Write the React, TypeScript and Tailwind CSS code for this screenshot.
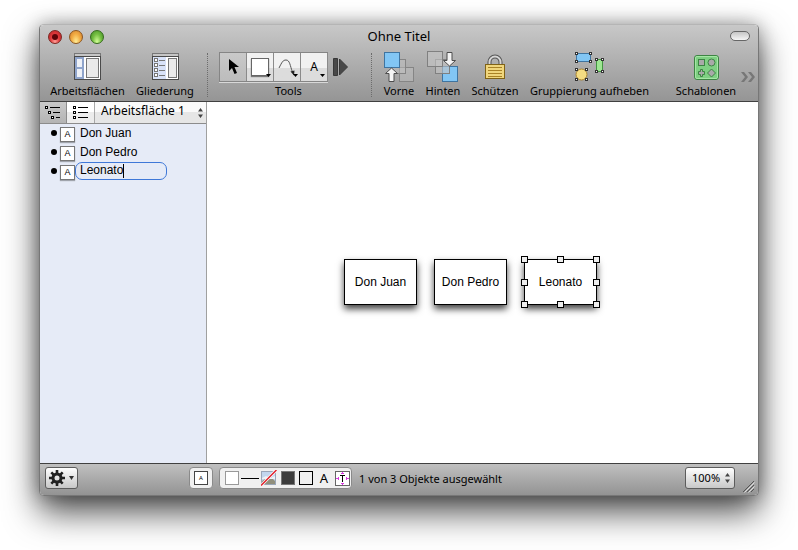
import { useState, type ReactNode } from 'react';

const UI_FONT = "font-['Noto_Sans','Open_Sans',sans-serif]";

function PanelIcon({ outline = false }: { outline?: boolean }) {
  return (
    <svg width="27" height="28" viewBox="0 0 27 28" shapeRendering="crispEdges">
      <rect x="0.5" y="0.5" width="26" height="3" fill="#c6c6c6" stroke="#777" />
      <rect x="0.5" y="3.5" width="26" height="23" fill="#fff" stroke="#4a4a4a" />
      {outline ? (
        <>
          <rect x="1" y="4" width="13" height="22" fill="#d8e2f8" />
          {[5, 10, 15, 20].map((y) => (
            <g key={y} stroke="#777" fill="#fff">
              <rect x="2.5" y={y + 0.5} width="3" height="3" />
              <path d={`M7 ${y + 2.5}h6`} />
            </g>
          ))}
          <rect x="16.5" y="5.5" width="8" height="19" fill="#eaeaea" stroke="#777" />
        </>
      ) : (
        <>
          <rect x="1" y="4" width="9" height="22" fill="#8fa4cb" />
          <rect x="3" y="6" width="5" height="8" fill="#eef1f7" />
          <rect x="3" y="16" width="5" height="8" fill="#eef1f7" />
          <rect x="12.5" y="5.5" width="12" height="19" fill="#eaeaea" stroke="#777" />
        </>
      )}
    </svg>
  );
}

function FrontIcon() {
  return (
    <svg width="32" height="32" viewBox="0 0 32 32">
      <g fill="#c4c4c4" fillOpacity="0.45" stroke="#858585">
        <rect x="16.5" y="16.5" width="14" height="14" />
        <rect x="8.5" y="8.5" width="14" height="14" />
      </g>
      <rect x="1.5" y="1.5" width="15" height="15" fill="#82c6f4" stroke="#3f74a0" />
      <path d="M8.500 17 L14.500 22.500 H11 V30.500 H6 V22.500 H2.500 Z" fill="#f4f4f4" stroke="#4d4d4d" />
    </svg>
  );
}

function BackIcon() {
  return (
    <svg width="32" height="32" viewBox="0 0 32 32">
      <rect x="15.500" y="15.500" width="15" height="15" fill="#82c6f4" stroke="#3f74a0" />
      <g fill="#c4c4c4" fillOpacity="0.6" stroke="#808080">
        <rect x="8.500" y="8.500" width="14" height="14" />
        <rect x="0.500" y="0.500" width="15" height="15" />
      </g>
      <path d="M20 1.500 H25 V9.500 H28.500 L22.500 15 L16.500 9.500 H20 Z" fill="#f4f4f4" stroke="#4d4d4d" />
    </svg>
  );
}

function LockIcon() {
  return (
    <svg width="20" height="26" viewBox="0 0 20 26">
      <path d="M4.500 11V8a5.500 5.500 0 0 1 11 0v3" fill="none" stroke="#555" strokeWidth="4" />
      <path d="M4.500 11V8a5.500 5.500 0 0 1 11 0v3" fill="none" stroke="#d6d6d6" strokeWidth="2" />
      <rect x="0.500" y="10.500" width="19" height="14" fill="#f0d67c" stroke="#806317" />
      <path d="M3 13.500h14M3 16.500h14M3 19.500h14M3 22.500h14" stroke="#a98225" />
    </svg>
  );
}

function UngroupIcon() {
  const marks: [number, number][] = [
    [0, 0], [14, 0], [0, 8], [14, 8],
    [20, 6], [26, 6], [20, 18], [26, 18],
    [0, 16], [10, 16], [0, 26], [10, 26],
  ];
  return (
    <svg width="30" height="30" viewBox="0 0 30 30">
      <rect x="1.500" y="1.500" width="14" height="8" fill="#82c6f4" stroke="#3f74a0" />
      <rect x="21.500" y="7.500" width="6" height="12" fill="#9ee692" stroke="#439441" />
      <circle cx="6.500" cy="22.500" r="5.500" fill="#f4dc82" stroke="#aa842e" />
      {marks.map(([x, y]) => (
        <rect key={`${x}-${y}`} x={x + 0.5} y={y + 0.5} width="2" height="2" fill="#fff" stroke="#333" />
      ))}
    </svg>
  );
}

function StencilIcon() {
  return (
    <svg width="25" height="25" viewBox="0 0 25 25">
      <rect x="0.500" y="0.500" width="24" height="24" rx="2.500" fill="#7fd083" stroke="#3d8443" />
      <rect x="1.500" y="1.500" width="22" height="22" rx="1.500" fill="none" stroke="#a5e6a5" />
      <g fill="#a9a9a9" stroke="#3d8443">
        <rect x="4.500" y="4.500" width="6" height="6" />
        <circle cx="17.500" cy="7.500" r="3.500" />
        <path d="M6.500 14.500h2v2h2v3h-2v2h-2v-2h-2v-3h2z" />
        <path d="M17.500 14 L21.500 18 L17.500 22 L13.500 18 Z" />
      </g>
    </svg>
  );
}

function DownMark() {
  return (
    <svg width="5" height="3" viewBox="0 0 5 3" className="absolute right-0.5 bottom-1">
      <path d="M0 0h5L2.500 3z" fill="#000" />
    </svg>
  );
}

function UpDown({ className }: { className: string }) {
  return (
    <svg width="5" height="12" viewBox="0 0 5 12" className={`pointer-events-none absolute ${className}`}>
      <path d="M2.500 1l2.500 3.500H0zM2.500 11l2.500-3.500H0z" fill="#444" />
    </svg>
  );
}

function ToolItem({ label, width, children }: { label: string; width: string; children: ReactNode }) {
  return (
    <button type="button" className={`flex shrink-0 flex-col items-center ${width}`}>
      <span className="flex h-8 items-center justify-center">{children}</span>
      <span className="text-[11px] leading-4 whitespace-nowrap">{label}</span>
    </button>
  );
}

function Separator() {
  return <div className="mr-px ml-[3px] h-11 shrink-0 border-l border-dotted border-[#6c6c6c]" />;
}

function Segment({ label, active = false, children }: { label: string; active?: boolean; children: ReactNode }) {
  return (
    <button
      type="button"
      aria-label={label}
      className={`relative flex w-[27px] items-center justify-center border-r border-[#8a8a8a] ${
        active
          ? 'bg-linear-to-b from-[#c9c9c9] to-[#bcbcbc]'
          : 'bg-linear-to-b from-[#f1f1f1] from-55% to-[#dcdcdc] to-55%'
      }`}
    >
      {children}
    </button>
  );
}

function OutlineGlyph({ nested = false }: { nested?: boolean }) {
  const rows = nested ? [[0, 5, 15], [3, 8, 15], [6, 11, 15]] : [[0, 5, 15], [0, 5, 15], [0, 5, 15]];
  return (
    <svg width="16" height="14" viewBox="0 0 16 14" shapeRendering="crispEdges">
      {rows.map(([x, a, b], i) => (
        <g key={i} stroke="#000" fill="#fff">
          <rect x={x + 0.5} y={i * 5 + 0.5} width="2" height="2" />
          <path d={`M${a} ${i * 5 + 1.5}H${b}`} />
        </g>
      ))}
    </svg>
  );
}

function RowMark() {
  return (
    <>
      <span className="mr-[3px] size-1.5 rounded-full bg-black" />
      <span className="mt-0.5 flex size-[15px] items-center justify-center border border-[#777] bg-white text-[9px] leading-none shadow-[0_1px_1px_rgba(0,0,0,0.3)]">
        A
      </span>
    </>
  );
}

function Node({ label, place, selected = false }: { label: string; place: string; selected?: boolean }) {
  const handles = [
    '-left-1 -top-1', 'left-8 -top-1', '-right-1 -top-1',
    '-left-1 top-[19px]', '-right-1 top-[19px]',
    '-left-1 -bottom-1', 'left-8 -bottom-1', '-right-1 -bottom-1',
  ];
  return (
    <div
      className={`absolute flex h-[46px] w-[73px] items-center justify-center border border-black bg-white text-[12px] leading-4 shadow-[0_4px_7px_rgba(0,0,0,0.75)] ${place}`}
    >
      {label}
      {selected && handles.map((h) => <span key={h} className={`absolute size-[7px] border border-black bg-[#eee] ${h}`} />)}
    </div>
  );
}

export default function App() {
  const [name, setName] = useState('Leonato');

  return (
    <div className={`flex min-h-screen flex-col bg-white px-[39px] pt-6 pb-[54px] text-black ${UI_FONT}`}>
      <main className="flex flex-1 flex-col rounded-[5px] border border-[#777] border-t-[#b5b5b5] bg-white shadow-[0_16px_34px_rgba(0,0,0,0.7),0_0_18px_rgba(0,0,0,0.3)]">
        <header className="rounded-t border-b border-[#404040] bg-linear-to-b from-[#c8c8c8] to-[#959595]">
          <div className="flex h-[23px] items-center pr-2 pl-2">
            <div className="flex flex-1 gap-[7px]">
              <button
                type="button"
                aria-label="Schließen"
                className="flex size-3.5 items-center justify-center rounded-full border border-[#7c2620] bg-radial-[at_50%_90%] from-[#ff9f98] via-[#e23b3c] to-[#b52126]"
              >
                <span className="size-1.5 rounded-full bg-[#5c0508]" />
              </button>
              <button
                type="button"
                aria-label="Minimieren"
                className="size-3.5 rounded-full border border-[#8c5620] bg-radial-[at_50%_90%] from-[#ffee98] via-[#f3ae45] to-[#d17b2a]"
              />
              <button
                type="button"
                aria-label="Zoomen"
                className="size-3.5 rounded-full border border-[#356b1c] bg-radial-[at_50%_90%] from-[#d4ff9a] via-[#77c043] to-[#3f8c24]"
              />
            </div>
            <h1 className="pb-0.5 text-[13px] leading-4">Ohne Titel</h1>
            <div className="flex flex-1 justify-end">
              <button
                type="button"
                aria-label="Symbolleiste"
                className="mb-0.5 h-2.5 w-5 rounded-full border border-[#666] bg-linear-to-b from-[#c6c6c6] to-[#f6f6f6]"
              />
            </div>
          </div>

          <div className="flex items-center gap-2.5 pt-[3px] pr-[3px] pb-0.5 pl-[9px]">
            <ToolItem label="Arbeitsflächen" width="w-[77px]">
              <PanelIcon />
            </ToolItem>
            <ToolItem label="Gliederung" width="w-[58px]">
              <PanelIcon outline />
            </ToolItem>
            <Separator />
            <div className="flex w-[139px] shrink-0 flex-col">
              <div className="flex h-8 items-center gap-[5px]">
                <div className="flex h-[30px] border-y border-l border-[#858585] shadow-[0_1px_0_#d8d8d8]">
                  <Segment label="Auswahl" active>
                    <svg width="11" height="16" viewBox="0 0 11 16">
                      <path d="M1 0v12l3-3 2.500 6 2.500-1-2.500-6H11z" fill="#000" />
                    </svg>
                  </Segment>
                  <Segment label="Form">
                    <span className="size-[18px] border border-[#666] bg-white shadow-[0_1px_1px_#777]" />
                    <DownMark />
                  </Segment>
                  <Segment label="Linie">
                    <svg width="20" height="20" viewBox="0 0 20 20">
                      <path d="M2 11C5 5 6 3 9 3c4 0 4 6 6.500 12" fill="none" stroke="#555" />
                      <path d="M13.500 14.500l4-1-0.500 5z" fill="#222" />
                    </svg>
                    <DownMark />
                  </Segment>
                  <Segment label="Text">
                    <span className="text-[12px] leading-4">A</span>
                    <DownMark />
                  </Segment>
                </div>
                <svg width="15" height="18" viewBox="0 0 15 18">
                  <path d="M0.500 0.500h4v17h-4zM6.500 1v16l8-8z" fill="#484848" stroke="#383838" />
                </svg>
              </div>
              <span className="text-center text-[11px] leading-4">Tools</span>
            </div>
            <Separator />
            <ToolItem label="Vorne" width="w-8">
              <FrontIcon />
            </ToolItem>
            <ToolItem label="Hinten" width="w-9">
              <BackIcon />
            </ToolItem>
            <ToolItem label="Schützen" width="w-12">
              <LockIcon />
            </ToolItem>
            <ToolItem label="Gruppierung aufheben" width="w-[121px]">
              <UngroupIcon />
            </ToolItem>
            <div className="ml-auto flex items-center gap-1">
              <ToolItem label="Schablonen" width="w-[62px]">
                <StencilIcon />
              </ToolItem>
              <button type="button" aria-label="Weitere Symbole" className="pt-1">
                <svg width="14" height="10" viewBox="0 0 14 10">
                  <path d="M0 0h3l4 5-4 5H0l4-5zM7 0h3l4 5-4 5H7l4-5z" fill="#777" />
                </svg>
              </button>
            </div>
          </div>
        </header>

        <div className="flex flex-1">
          <aside className="flex w-[167px] shrink-0 flex-col border-r border-[#a0a0a0] bg-[#e6ebf7]">
            <div className="flex h-[22px] border-b border-[#8c8c8c]">
              <button
                type="button"
                aria-label="Gliederung"
                className="flex w-[27px] items-center justify-center border-r border-[#8c8c8c] bg-linear-to-b from-[#c9c9c9] to-[#b4b4b4]"
              >
                <OutlineGlyph nested />
              </button>
              <button
                type="button"
                aria-label="Liste"
                className="flex w-7 items-center justify-center border-r border-[#a8a8a8] bg-linear-to-b from-white from-50% to-[#ececec] to-50%"
              >
                <OutlineGlyph />
              </button>
              <div className="relative flex-1 bg-linear-to-b from-[#fafafa] from-50% to-[#e6e6e6] to-50%">
                <select
                  aria-label="Arbeitsfläche"
                  className="block h-full w-full appearance-none bg-transparent pb-1 pl-1.5 text-[12px] leading-4"
                >
                  <option>Arbeitsfläche 1</option>
                </select>
                <UpDown className="top-[5px] right-[3px]" />
              </div>
            </div>
            <ul className="font-['Liberation_Sans',Arial,sans-serif] text-[12px]">
              {['Don Juan', 'Don Pedro'].map((item) => (
                <li key={item} className="flex h-[19px] items-center pb-px pl-[11px]">
                  <RowMark />
                  <span className="pb-px pl-[5px] leading-4">{item}</span>
                </li>
              ))}
              <li className="flex h-[19px] items-center pb-px pl-[11px]">
                <RowMark />
                <div className="relative">
                  <input
                    type="text"
                    aria-label="Name"
                    value={name}
                    onChange={(e) => setName(e.target.value)}
                    className="block h-[18px] w-[92px] rounded-[7px] border border-[#3f78d8] bg-transparent pb-0.5 pl-1 leading-4 outline-none"
                  />
                  <span className="absolute top-0.5 left-12 h-3.5 w-px bg-black" />
                </div>
              </li>
            </ul>
          </aside>

          <section className="relative flex-1 bg-white font-['Liberation_Sans',Arial,sans-serif]">
            <Node label="Don Juan" place="left-[137px] top-[157px]" />
            <Node label="Don Pedro" place="left-[227px] top-[157px]" />
            <Node label="Leonato" place="left-[317px] top-[157px]" selected />
          </section>
        </div>

        <footer className="flex h-8 items-start rounded-b border-t border-[#404040] bg-linear-to-b from-[#c0c0c0] to-[#939393] pt-[3px] pr-[3px] pl-[5px]">
          <button
            type="button"
            aria-label="Aktionen"
            className="flex h-[22px] w-[33px] items-center justify-center gap-1 rounded-[3px] border border-[#5c5c5c] bg-linear-to-b from-white to-[#c8c8c8]"
          >
            <svg width="16" height="16" viewBox="0 0 16 16">
              <circle cx="8" cy="8" r="4" fill="none" stroke="#222" strokeWidth="3" />
              <path
                d="M8 0v3.500M8 12.500V16M0 8h3.500M12.500 8H16M2.300 2.300l2.500 2.500M11.200 11.200l2.500 2.500M13.700 2.300l-2.500 2.500M4.800 11.200l-2.500 2.500"
                stroke="#222"
                strokeWidth="2.600"
              />
            </svg>
            <svg width="5" height="4" viewBox="0 0 5 4">
              <path d="M0 0h5L2.500 4z" fill="#333" />
            </svg>
          </button>
          <button
            type="button"
            aria-label="Textform"
            className="ml-[111px] flex h-[22px] w-6 items-center justify-center rounded border border-[#8a8a8a] bg-[#f0f0f0]"
          >
            <span className="flex size-3.5 items-center justify-center border border-[#444] bg-white text-[6px] leading-none">A</span>
          </button>
          <div className="ml-1.5 flex h-[22px] w-[133px] items-center gap-0.5 rounded border border-[#8a8a8a] bg-[#f0f0f0] pl-[5px]">
            <button type="button" aria-label="Füllung" className="size-3.5 border border-[#999] bg-white" />
            <button type="button" aria-label="Linie" className="flex h-3.5 w-[18px] items-center">
              <span className="h-px w-full bg-black" />
            </button>
            <button type="button" aria-label="Bild">
              <svg width="16" height="16" viewBox="0 0 16 16">
                <rect x="0.500" y="1.500" width="14" height="13" fill="#c2d6ee" stroke="#9aa6b8" />
                <path d="M1 14v-3l3-2 3 1 3-3 4 4v3z" fill="#918f7c" />
                <path d="M1 8l4-2 4 2 5-2v3H1z" fill="#eef2f6" />
                <path d="M0 15.500L15.500 0" stroke="#fff" strokeWidth="3" />
                <path d="M0 15.500L15.500 0" stroke="#e0202a" strokeWidth="1.500" />
              </svg>
            </button>
            <button type="button" aria-label="Schatten" className="ml-0.5 size-3.5 border border-[#777] bg-[#3c3c3c]" />
            <button type="button" aria-label="Kontur" className="ml-0.5 size-3.5 border border-black bg-[#f0f0f0]" />
            <button type="button" aria-label="Schrift" className="ml-0.5 w-3.5 text-[13px] leading-4">
              A
            </button>
            <button type="button" aria-label="Textposition" className="ml-0.5">
              <svg width="15" height="15" viewBox="0 0 15 15" shapeRendering="crispEdges">
                <rect x="0.500" y="0.500" width="14" height="14" fill="#fff" stroke="#666" />
                <path d="M7.500 1v2M6 2.500h3M7.500 12v2M6 12.500h3M1 7.500h2M3.500 6v3M12 7.500h2M11.500 6v3" stroke="#d83be0" />
                <path d="M5 4.500h5M7.500 4v7" stroke="#000" />
              </svg>
            </button>
          </div>
          <p className="ml-[7px] pt-1 text-[11px] leading-4">1 von 3 Objekte ausgewählt</p>
          <div className="relative ml-auto">
            <select
              aria-label="Zoomstufe"
              className="block h-[22px] w-[50px] appearance-none rounded-[3px] border border-[#5c5c5c] bg-linear-to-b from-white to-[#c8c8c8] pl-1.5 text-[11px] leading-4"
            >
              <option>100%</option>
            </select>
            <UpDown className="top-[5px] right-[5px]" />
          </div>
          <svg width="12" height="12" viewBox="0 0 12 12" className="mt-3.5 ml-2 shrink-0">
            <path d="M0 11L11 0M4 11l7-7M8 11l3-3" stroke="#555" />
            <path d="M1.500 11.500l10-10M5.500 11.500l6-6" stroke="#ddd" />
          </svg>
        </footer>
      </main>
    </div>
  );
}
